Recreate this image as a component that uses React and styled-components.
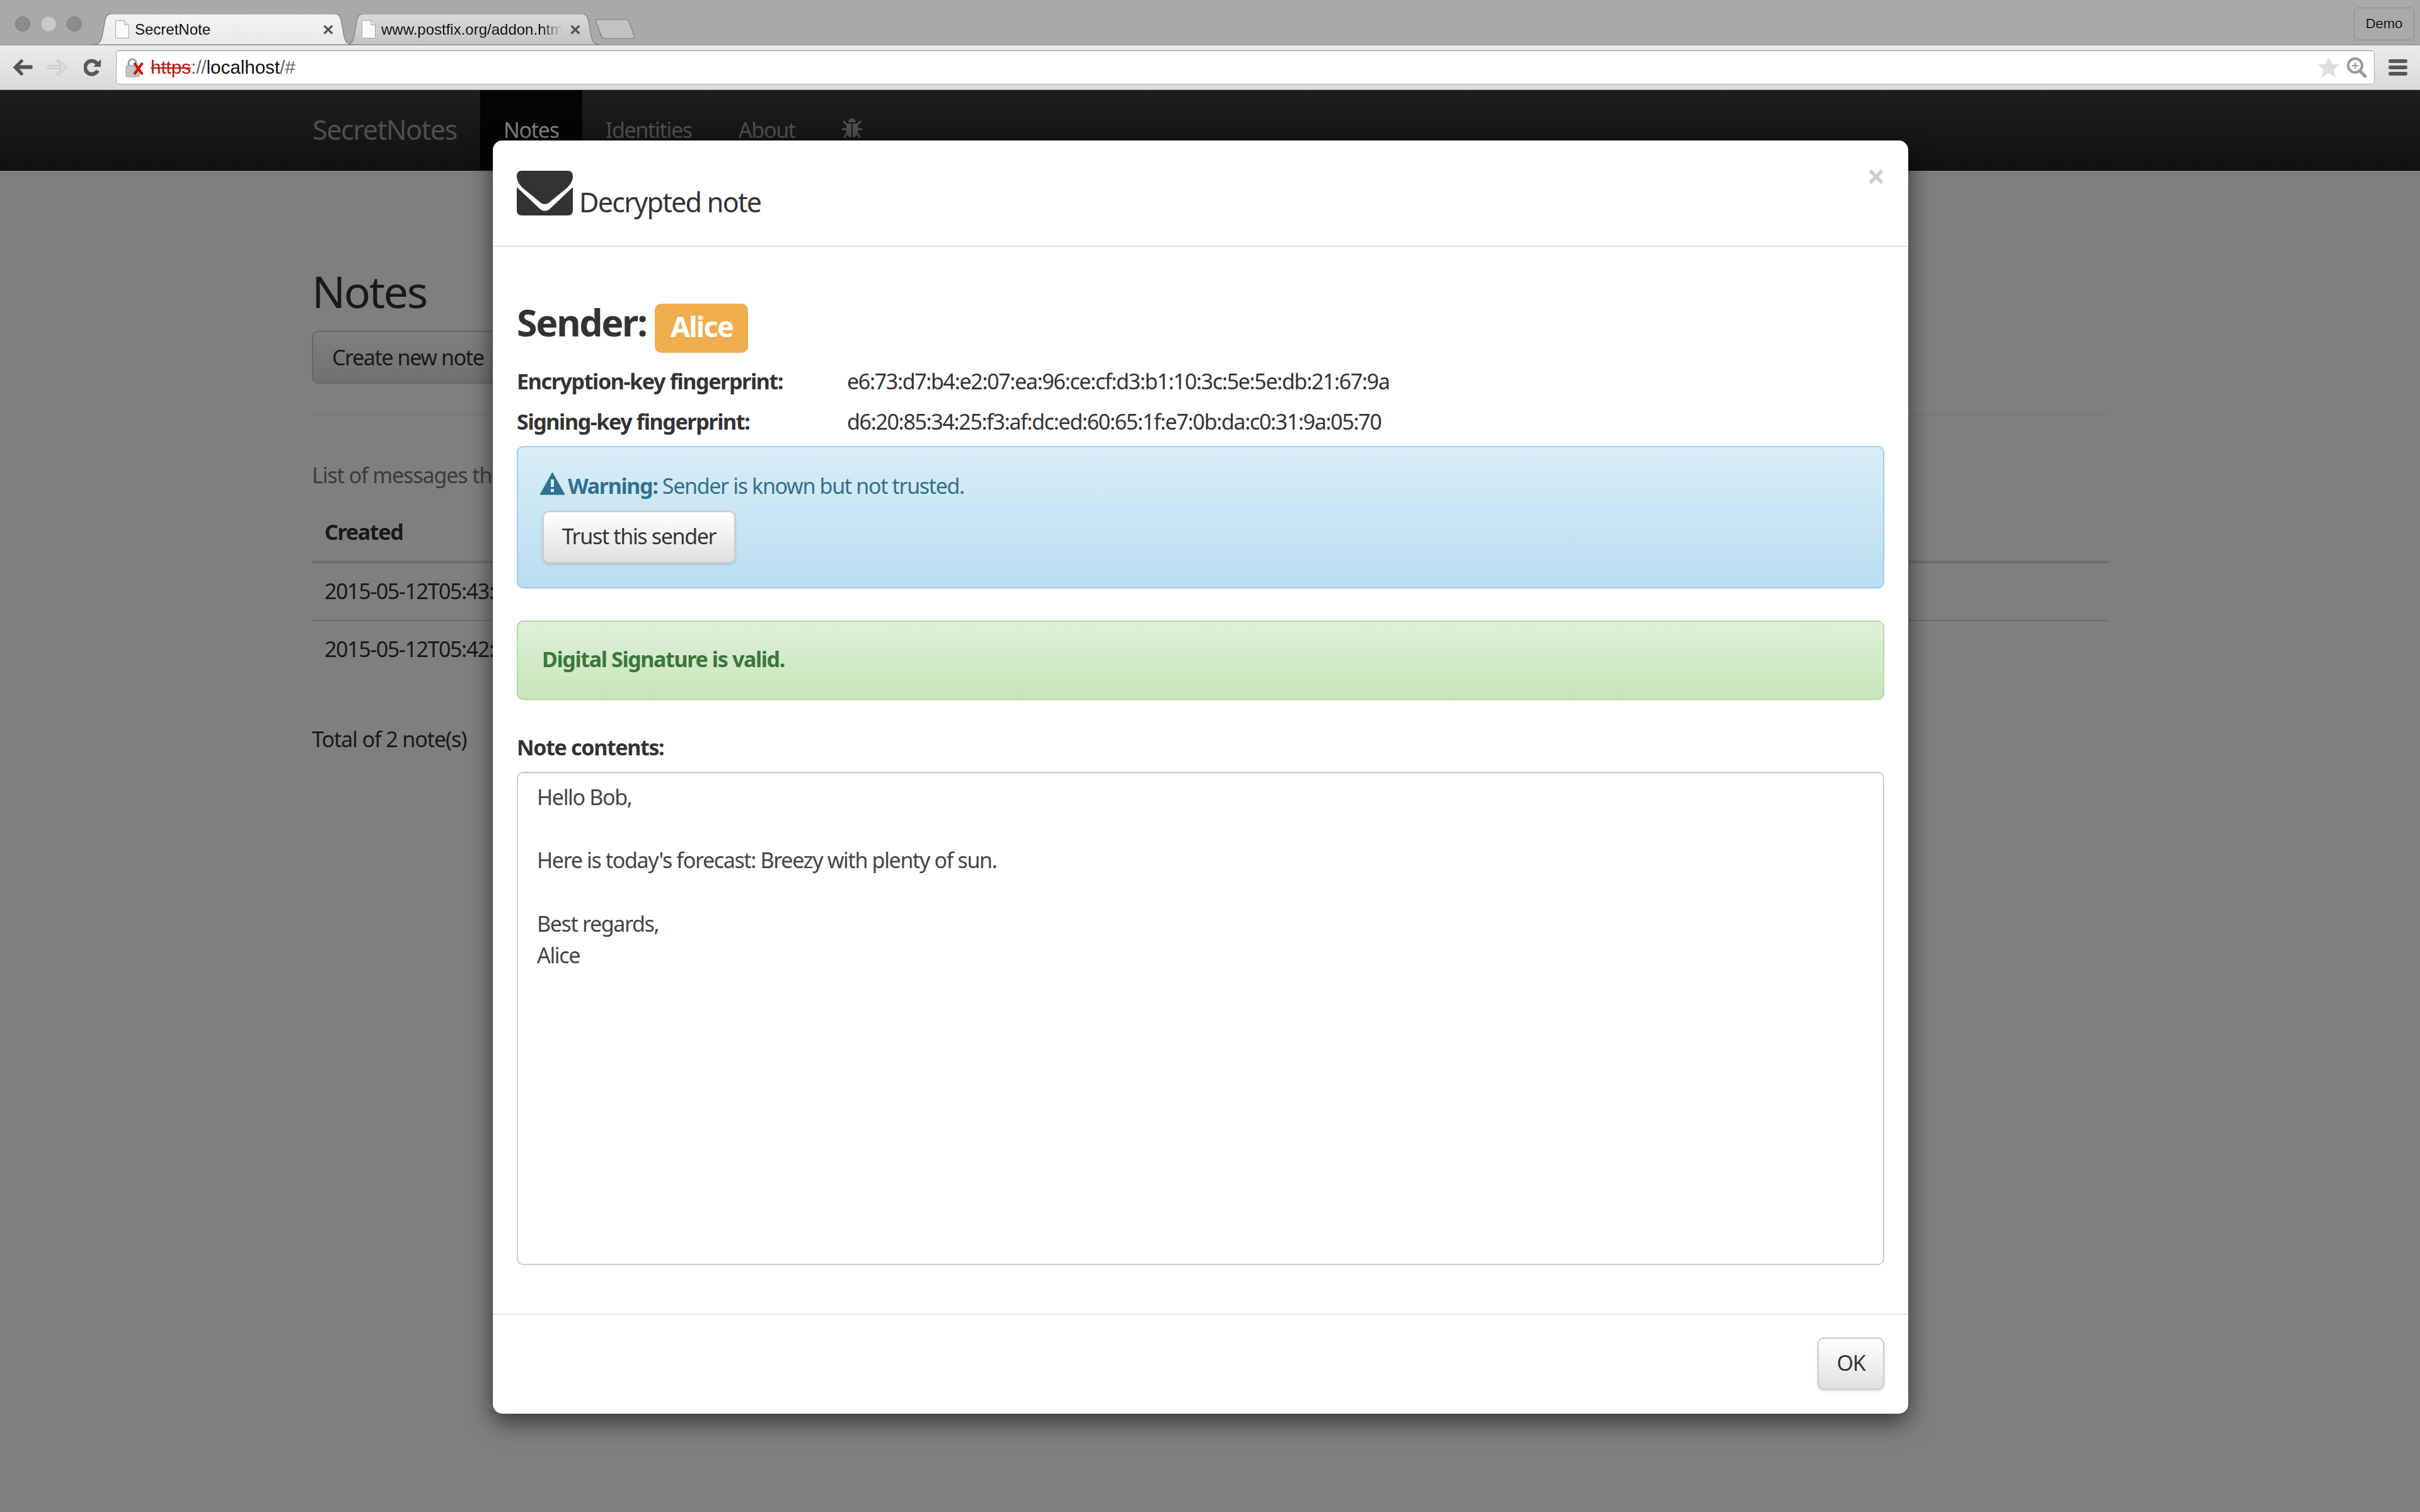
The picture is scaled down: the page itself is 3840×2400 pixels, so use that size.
import React from 'react';
import styled, { createGlobalStyle } from 'styled-components';

const Global = createGlobalStyle`
  html, body { margin: 0; padding: 0; background: #fff; }
  body { font-family: "Noto Sans", "Lato", sans-serif; color: #333; }
  * { box-sizing: border-box; }
`;
const SANS = '"Noto Sans", "Lato", sans-serif';
const UI = '"Liberation Sans", Arial, sans-serif';

const Screen = styled.div`position: relative; width: 3840px; height: 2400px; overflow: hidden; background: #fff;`;

/* browser chrome */
const TabStrip = styled.div`
  height: 72px; background: #a9a9a9; display: flex; align-items: flex-end; padding-left: 24px; position: relative; z-index: 3;
  border-bottom: 1px solid #8f8f8f;
`;
const Lights = styled.div`display: flex; gap: 17px; align-self: flex-start; margin-top: 26px; margin-right: 17px;`;
const Light = styled.span`
  width: 24px; height: 24px; border-radius: 50%; background: ${p => p.$on ? '#c9c9c9' : '#8c8c8c'};
  border: 1px solid ${p => p.$on ? '#bdbdbd' : '#7d7d7d'};
`;
const Tab = styled.div`
  position: relative; height: 49px; width: ${p => p.$w}px; margin-right: ${p => p.$mr || 0}px; flex: none;
  display: flex; align-items: center; padding-left: ${p => p.$pl}px; padding-right: 33px; z-index: ${p => p.$z};
`;
const TabShape = styled.svg`position: absolute; inset: 0; width: 100%; height: 100%;`;
const TabFile = styled.svg`position: relative; width: 22px; height: 29px; flex: none; margin-right: 9px;`;
const TabTitle = styled.span`
  position: relative; flex: 1; min-width: 0; overflow: hidden; white-space: nowrap; font: 24px ${UI}; color: #111; padding-top: 1px;
  ${p => p.$fade && `-webkit-mask-image: linear-gradient(90deg, #000 88%, transparent); mask-image: linear-gradient(90deg, #000 88%, transparent);`}
`;
const TabClose = styled.span`position: relative; flex: none; font: 700 30px/1 ${UI}; color: #555; margin-left: 12px; width: 16px; text-align: center;`;
const NewTab = styled.svg`width: 64px; height: 32px; flex: none; margin-bottom: 9px; margin-left: 0;`;
const Demo = styled.div`
  position: absolute; right: 9px; top: 12px; width: 96px; height: 52px; border: 1px solid #8a8a8a; border-radius: 6px;
  display: flex; align-items: center; justify-content: center; font: 22px ${UI}; color: #111; text-shadow: 0 1px 0 #d8d8d8;
`;
const Toolbar = styled.div`
  height: 71px; display: flex; align-items: center; padding: 0 20px; position: relative; z-index: 3;
  background: linear-gradient(#ececec, #dadada); border-bottom: 1px solid #a6a6a6;
`;
const NavIcon = styled.svg`width: ${p => p.$w}px; height: 30px; flex: none; margin-right: ${p => p.$mr}px;`;
const Omnibox = styled.div`
  width: 3584px; height: 54px; flex: none; background: #fff; border: 1px solid #a8a8a8; border-top-color: #8f8f8f; border-radius: 5px;
  display: flex; align-items: center; padding-left: 14px; padding-right: 11px;
`;
const Lock = styled.svg`width: 30px; height: 32px; flex: none; margin-right: 10px;`;
const Url = styled.div`flex: 1; font: 29.5px ${UI}; color: #111; white-space: nowrap;`;
const UrlScheme = styled.span`color: #b3170f; text-decoration: line-through;`;
const UrlDim = styled.span`color: #666;`;
const OmniIcon = styled.svg`width: ${p => p.$w}px; height: 36px; margin-left: ${p => p.$ml}px; flex: none;`;
const Menu = styled.div`display: flex; flex-direction: column; gap: 4px; margin-left: 22px; flex: none;`;
const MenuBar = styled.span`width: 30px; height: 6px; border-radius: 3px; background: #585858;`;

/* underlying page */
const Navbar = styled.div`
  height: 128px; background: linear-gradient(#3c3c3c, #222); border-bottom: 1px solid #080808; padding-left: 496px; display: flex; align-items: stretch;
`;
const Brand = styled.div`font: 43px/125px ${SANS}; color: #9d9d9d; width: 266px; letter-spacing: -1.4px;`;
const NavLink = styled.div`
  font: 34px/123px ${SANS}; letter-spacing: -1.3px; color: ${p => p.$active ? '#fff' : '#9d9d9d'}; background: ${p => p.$active ? '#080808' : 'transparent'};
  padding: 0 37px; display: flex; align-items: center;
`;
const Bug = styled.svg`width: 32px; height: 34px; margin-top: -8px; display: block;`;
const Page = styled.div`padding: 0 494px 0 495px; position: relative;`;
const PageTitle = styled.h1`font: 400 70px/84px ${SANS}; letter-spacing: -2.4px; margin: 0; padding-top: 149px; color: #333; height: 254px;`;
const CreateBtn = styled.div`
  width: 330px; height: 84px; border: 2px solid #ccc; border-radius: 10px; background: linear-gradient(#fff, #e0e0e0);
  display: flex; align-items: center; padding-left: 30px; font: 34px ${SANS}; letter-spacing: -1.4px; color: #333; white-space: nowrap;
`;
const Rule = styled.div`height: 2px; background: #eee; margin-top: 48px;`;
const Muted = styled.p`font: 34px/50px ${SANS}; letter-spacing: -1.1px; color: #777; margin: 70px 0 0;`;
const TableHead = styled.div`height: 115px; padding: 40px 0 0 20px; font: 700 34px/50px ${SANS}; letter-spacing: -1.3px; color: #333; border-bottom: 4px solid #ddd;`;
const TableRow = styled.div`
  height: 92px; padding: 19px 0 0 20px; font: 34px/50px ${SANS}; letter-spacing: -1.4px; color: #333;
  border-bottom: 2px solid #ddd;
  &:last-of-type { border-bottom: 0; }
`;
const Total = styled.p`font: 34px/50px ${SANS}; letter-spacing: -1.1px; color: #333; margin: 70px 0 0;`;

/* modal */
const Backdrop = styled.div`
  position: absolute; left: 0; right: 0; top: 143px; bottom: 0; background: rgba(0,0,0,.5); z-index: 2; padding: 80px 0 0 782px;
`;
const Modal = styled.div`
  width: 2246px; height: 2021px; background: #fff; border-radius: 15px; box-shadow: 0 12px 38px rgba(0,0,0,.6), 0 0 2px rgba(0,0,0,.6);
  display: flex; flex-direction: column; position: relative;
`;
const Head = styled.div`height: 169px; border-bottom: 2px solid #e5e5e5; padding: 48px 38px 0; display: flex; align-items: flex-start;`;
const Envelope = styled.svg`width: 89px; height: 71px; flex: none;`;
const ModalTitle = styled.h4`font: 400 43px/1 ${SANS}; letter-spacing: -1.7px; margin: 28px 0 0 10px; color: #333;`;
const Close = styled.span`position: absolute; right: 36px; top: 30px; font: 700 52px/1 ${SANS}; color: #ccc;`;
const Body = styled.div`flex: 1; padding: 90px 38px 0;`;
const SenderRow = styled.div`display: flex; align-items: flex-start; height: 93px;`;
const SenderLabel = styled.h3`font: 700 59px/1 ${SANS}; letter-spacing: -2.3px; margin: 0; color: #333;`;
const Badge = styled.span`
  margin-left: 14px; width: 148px; height: 78px; border-radius: 10px; background: #f0ad4e; color: #fff;
  font: 700 45px/72px ${SANS}; letter-spacing: -1.8px; text-align: center;
`;
const KeyRow = styled.div`display: flex; height: 64px; font: 34px/61px ${SANS}; letter-spacing: -1.35px;`;
const KeyLabel = styled.span`width: 524px; font-weight: 700; flex: none;`;
const InfoAlert = styled.div`
  border: 2px solid #9acfea; border-radius: 10px; margin: 5px 0 51px; height: 226px;
  background: linear-gradient(#d9edf7, #b9def0); color: #31708f;
  box-shadow: inset 0 1px 0 rgba(255,255,255,.25), 0 1px 2px rgba(0,0,0,.05);
  padding: 36px 38px; font: 34px/50px ${SANS}; letter-spacing: -1.35px;
`;
const SuccessAlert = styled.div`
  border: 2px solid #b2dba1; border-radius: 10px; margin-bottom: 51px; height: 126px;
  background: linear-gradient(#dff0d8, #c8e5bc); color: #3c763d;
  box-shadow: inset 0 1px 0 rgba(255,255,255,.25), 0 1px 2px rgba(0,0,0,.05);
  padding: 34px 38px; font: 34px/50px ${SANS}; letter-spacing: -1.35px;
`;
const AlertLine = styled.div`display: flex; align-items: center; white-space: pre;`;
const Warn = styled.svg`width: 41px; height: 37px; margin-left: -4px; margin-right: 4px; flex: none; margin-top: -8px;`;
const Strong = styled.strong`font-weight: 700;`;
const Btn = styled.div`
  display: flex; flex: none; align-items: center; justify-content: center; width: ${p => p.$w}px; height: ${p => p.$h}px; padding-bottom: 3px;
  border: 2px solid #ccc; border-radius: 10px; background: linear-gradient(#fff, #e0e0e0); color: #333;
  box-shadow: 0 2px 4px rgba(0,0,0,.15); text-shadow: 0 1px 0 #fff; font: 34px ${SANS}; letter-spacing: -1.35px;
`;
const TrustBtn = styled(Btn)`margin: 15px 0 0 1px;`;
const NoteLabel = styled.div`font: 700 34px/50px ${SANS}; letter-spacing: -1.35px; margin-top: -1px;`;
const Note = styled.div`
  height: 783px; margin-top: 14px; border: 2px solid #ccc; border-radius: 10px; padding: 13px 30px; white-space: pre-line;
  font: 34px/50.2px ${SANS}; letter-spacing: -1.35px; color: #444; box-shadow: inset 0 1px 1px rgba(0,0,0,.075);
`;
const Foot = styled.div`height: 159px; border-top: 2px solid #e5e5e5; padding: 36px 38px; display: flex; justify-content: flex-end;`;

const tabPath = 'M0 49 C10 49 13 44 15 36 L20 9 C21.500 3 24 0 31 0 L383 0 C390 0 392.500 3 394 9 L399 36 C401 44 404 49 414 49 Z';

const TabBg = ({ active, id }) => (
  <TabShape viewBox="0 0 414 49" preserveAspectRatio="none">
    <defs>
      <linearGradient id={id} x1="0" y1="0" x2="0" y2="1">
        <stop offset="0" stopColor={active ? '#f3f3f3' : '#d9d9d9'} />
        <stop offset="1" stopColor={active ? '#e9e9e9' : '#c4c4c4'} />
      </linearGradient>
    </defs>
    <path d={tabPath} fill={`url(#${id})`} stroke="#7f7f7f" strokeWidth="1.2" />
  </TabShape>
);
const FileGlyph = () => (
  <TabFile viewBox="0 0 22 29">
    <path d="M.5.5h14l7 7v21H.5z" fill="#fafafa" stroke="#a5a5a5" />
    <path d="M14.500.5v7h7" fill="#e6e6e6" stroke="#a5a5a5" />
  </TabFile>
);

export default function App() {
  return (
    <Screen>
      <Global />
      <TabStrip>
        <Lights><Light /><Light $on /><Light /></Lights>
        <Tab $w={414} $mr={-14} $z={2} $pl={36}>
          <TabBg active id="t1" />
          <FileGlyph />
          <TabTitle>SecretNote</TabTitle>
          <TabClose>×</TabClose>
        </Tab>
        <Tab $w={406} $mr={-9} $z={1} $pl={27}>
          <TabBg id="t2" />
          <FileGlyph />
          <TabTitle $fade>www.postfix.org/addon.html</TabTitle>
          <TabClose>×</TabClose>
        </Tab>
        <NewTab viewBox="0 0 64 32">
          <path d="M4 1h44c4 0 6 2 7 6l7 19c1 4 0 5-4 5H16c-4 0-5-2-6-5L2 5C1 2 2 1 4 1z" fill="#c2c2c2" stroke="#7f7f7f" strokeWidth="1.2" />
        </NewTab>
        <Demo>Demo</Demo>
      </TabStrip>
      <Toolbar>
        <NavIcon $w={32} $mr={23} viewBox="0 0 32 30">
          <path d="M14 2 1 15l13 13 3-3-7-8h21v-5H10l7-7z" fill="#555" stroke="#555" strokeLinejoin="round" />
        </NavIcon>
        <NavIcon $w={32} $mr={26} viewBox="0 0 32 30">
          <path d="M18 2 31 15 18 28l-3-3 7-8H1v-5h21l-7-7z" fill="#ddd" stroke="#b5b5b5" strokeLinejoin="round" />
        </NavIcon>
        <NavIcon $w={28} $mr={23} viewBox="0 0 28 30">
          <path d="M22 20a10.500 10.500 0 1 1-1-11" fill="none" stroke="#585858" strokeWidth="6" />
          <path d="M27 2v12H15z" fill="#585858" />
        </NavIcon>
        <Omnibox>
          <Lock viewBox="0 0 30 32">
            <path d="M5 14V9a6 6 0 0 1 12 0v5" fill="none" stroke="#999" strokeWidth="3" />
            <rect x="1" y="13" width="21" height="18" rx="2" fill="#c4c4c4" stroke="#999" />
            <path d="M14 9l13 18M27 9 14 27" stroke="#c3130f" strokeWidth="4" />
          </Lock>
          <Url><UrlScheme>https</UrlScheme><UrlDim>://</UrlDim>localhost<UrlDim>/#</UrlDim></Url>
          <OmniIcon $w={36} viewBox="0 0 36 36">
            <path d="M18 1l5 11.500 12.500 1-9.500 8 3 12.500L18 27l-11 7 3-12.500-9.500-8 12.500-1z" fill="#dedede" />
          </OmniIcon>
          <OmniIcon $w={32} $ml={11} viewBox="0 0 32 36">
            <circle cx="13" cy="15" r="11" fill="#fff" stroke="#999" strokeWidth="4" />
            <path d="M21 24l8 8" stroke="#999" strokeWidth="5" strokeLinecap="round" />
            <path d="M13 10v10M8 15h10" stroke="#999" strokeWidth="2" />
          </OmniIcon>
        </Omnibox>
        <Menu><MenuBar /><MenuBar /><MenuBar /></Menu>
      </Toolbar>

      <Navbar>
        <Brand>SecretNotes</Brand>
        <NavLink $active>Notes</NavLink>
        <NavLink>Identities</NavLink>
        <NavLink>About</NavLink>
        <NavLink>
          <Bug viewBox="0 0 32 34">
            <path d="M10 8a6 6 0 0 1 12 0z" fill="currentColor" />
            <path d="M7 10h8v22c-4 0-8-4-8-9zM25 10h-8v22c4 0 8-4 8-9z" fill="currentColor" />
            <path d="M2 6l6 6M30 6l-6 6M0 19h8M32 19h-8M3 32l6-7M29 32l-6-7" stroke="currentColor" strokeWidth="3" fill="none" />
          </Bug>
        </NavLink>
      </Navbar>
      <Page>
        <PageTitle>Notes</PageTitle>
        <CreateBtn>Create new note</CreateBtn>
        <Rule />
        <Muted>List of messages that you have received</Muted>
        <TableHead>Created</TableHead>
        <TableRow>2015-05-12T05:43:21</TableRow>
        <TableRow>2015-05-12T05:42:10</TableRow>
        <Total>Total of 2 note(s)</Total>
      </Page>

      <Backdrop>
        <Modal>
          <Head>
            <Envelope viewBox="0 0 89 71">
              <path d="M8 0h73c6 0 8 4 8 9 0 7-5 14-9 18L52 50c-4 4-11 4-15 0L9 27C5 23 0 16 0 9 0 4 2 0 8 0z" fill="#333" />
              <path d="M0 26v37c0 5 3 8 8 8h73c5 0 8-3 8-8V26L53 60c-5 5-12 5-17 0z" fill="#333" />
            </Envelope>
            <ModalTitle>Decrypted note</ModalTitle>
          </Head>
          <Close>×</Close>
          <Body>
            <SenderRow>
              <SenderLabel>Sender:</SenderLabel>
              <Badge>Alice</Badge>
            </SenderRow>
            <KeyRow><KeyLabel>Encryption-key fingerprint:</KeyLabel>e6:73:d7:b4:e2:07:ea:96:ce:cf:d3:b1:10:3c:5e:5e:db:21:67:9a</KeyRow>
            <KeyRow><KeyLabel>Signing-key fingerprint:</KeyLabel>d6:20:85:34:25:f3:af:dc:ed:60:65:1f:e7:0b:da:c0:31:9a:05:70</KeyRow>
            <InfoAlert>
              <AlertLine>
                <Warn viewBox="0 0 41 37">
                  <path d="M20.500 1 40 36H1z" fill="#31708f" stroke="#31708f" strokeLinejoin="round" />
                  <rect x="18" y="12" width="5" height="12" fill="#d2e9f5" />
                  <rect x="18" y="27" width="5" height="5" fill="#d2e9f5" />
                </Warn>
                <Strong>Warning:</Strong> Sender is known but not trusted.
              </AlertLine>
              <TrustBtn $w={306} $h={83}>Trust this sender</TrustBtn>
            </InfoAlert>
            <SuccessAlert><Strong>Digital Signature is valid.</Strong></SuccessAlert>
            <NoteLabel>Note contents:</NoteLabel>
            <Note>{"Hello Bob,\n\nHere is today's forecast: Breezy with plenty of sun.\n\nBest regards,\nAlice"}</Note>
          </Body>
          <Foot><Btn $w={106} $h={83}>OK</Btn></Foot>
        </Modal>
      </Backdrop>
    </Screen>
  );
}
